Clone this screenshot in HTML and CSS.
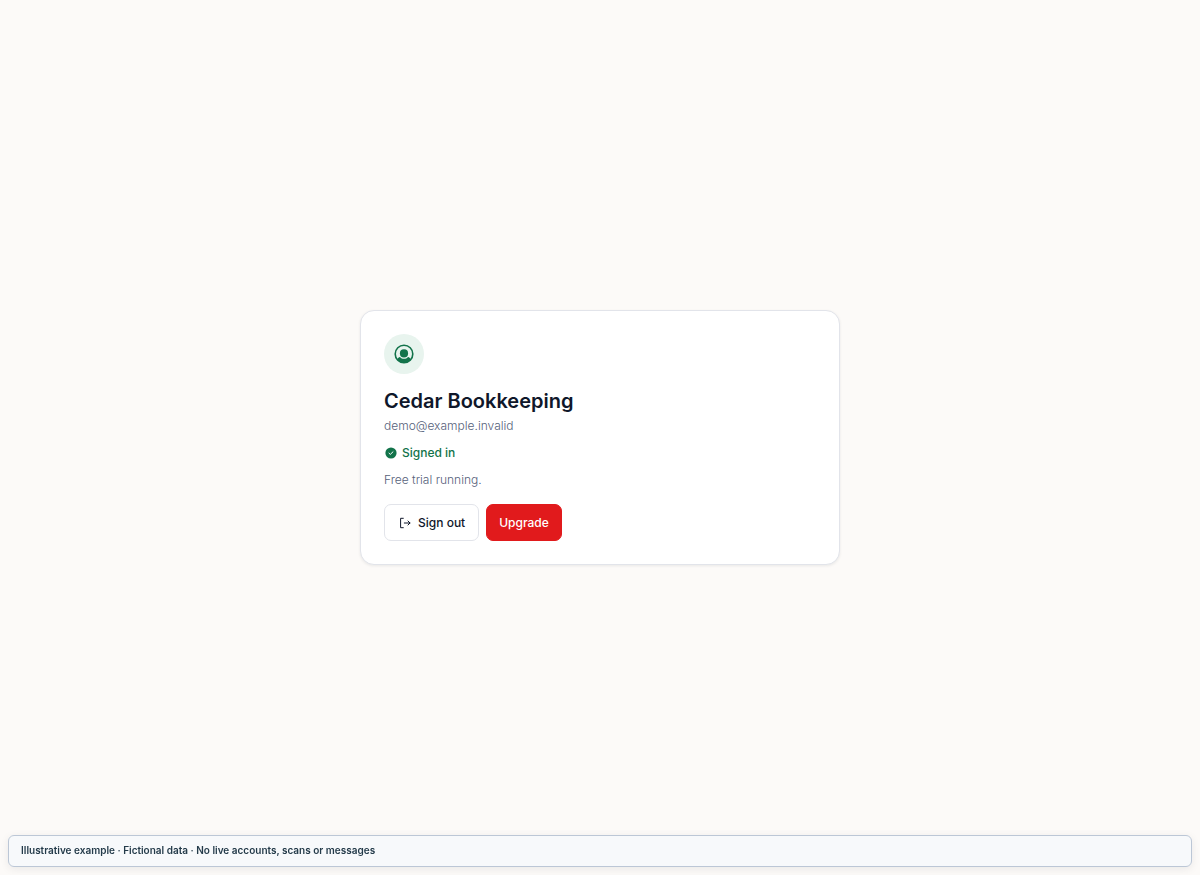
FILE: index.html
```html
<!DOCTYPE html>
<html lang="en">
<head>
<meta charset="utf-8">
<meta name="viewport" content="width=device-width, initial-scale=1">
<title>Cedar Bookkeeping</title>
<link rel="stylesheet" href="styles.css">
</head>
<body>
<main class="page">
  <section class="card" aria-labelledby="account-name">
    <div class="avatar">
      <svg class="avatar-icon" viewBox="0 0 20 20" aria-hidden="true">
        <circle cx="10" cy="10" r="8.8" fill="none" stroke="currentColor" stroke-width="1.6"/>
        <circle cx="10" cy="9.4" r="4.1" fill="currentColor"/>
        <path d="M3.2 15.4C3.9 13.9 4.8 13.1 5.9 12.9C7 14.2 8.4 14.7 10 14.7C11.6 14.7 13 14.2 14.1 12.9C15.2 13.1 16.1 13.9 16.8 15.4C15.1 17.7 12.7 18.9 10 18.9C7.3 18.9 4.9 17.7 3.2 15.4Z" fill="currentColor"/>
      </svg>
    </div>
    <h1 class="name" id="account-name">Cedar Bookkeeping</h1>
    <p class="detail">demo@example.invalid</p>
    <p class="status">
      <svg class="status-icon" viewBox="0 0 14 14" aria-hidden="true">
        <circle cx="7" cy="7" r="5.6" fill="currentColor"/>
        <path d="M5 7.2L6.3 8.4L9 5.8" fill="none" stroke="#fff" stroke-width="1" stroke-linecap="round" stroke-linejoin="round"/>
      </svg>
      Signed in
    </p>
    <p class="detail">Free trial running.</p>
    <div class="actions">
      <button class="button" type="button">
        <svg class="button-icon" viewBox="0 0 14 14" aria-hidden="true">
          <path d="M5.3 2.3H2.6V11.7H5.3M6.3 7H12M10 5L12 7L10 9" fill="none" stroke="currentColor" stroke-width="1" stroke-linecap="round" stroke-linejoin="round"/>
        </svg>
        Sign out
      </button>
      <button class="button button-primary" type="button">Upgrade</button>
    </div>
  </section>
</main>
<footer class="notice">Illustrative example · Fictional data · No live accounts, scans or messages</footer>
</body>
</html>
```
FILE: styles.css
```css
* {
  box-sizing: border-box;
}

body {
  margin: 0;
  background: #fcfaf8;
  color: #0f172a;
  font-family: Inter, "Liberation Sans", sans-serif;
  font-size: 12px;
  line-height: 20px;
}

.page {
  display: flex;
  align-items: center;
  justify-content: center;
  min-height: 100vh;
  padding: 48px 16px;
}

.card {
  width: 100%;
  max-width: 480px;
  padding: 23px;
  border: 1px solid #e2e4ea;
  border-radius: 14px;
  background: #fff;
  box-shadow: 0 1px 3px rgba(15, 23, 42, 0.08);
}

.avatar {
  display: grid;
  place-items: center;
  width: 40px;
  height: 40px;
  border-radius: 50%;
  background: #e8f4ee;
  color: #12734a;
}

.avatar-icon {
  width: 20px;
  height: 20px;
}

.name {
  margin: 13px 0 1px;
  font-size: 20px;
  font-weight: 600;
  line-height: 28px;
}

.detail,
.status {
  margin: 0;
}

.detail {
  color: #56617a;
  font-weight: 300;
}

.status {
  display: flex;
  align-items: center;
  gap: 4px;
  margin: 7px 0;
  color: #12734a;
  font-weight: 500;
}

.status-icon,
.button-icon {
  width: 14px;
  height: 14px;
}

.actions {
  display: flex;
  flex-wrap: wrap;
  gap: 7px;
  margin-top: 14px;
}

.button {
  display: flex;
  align-items: center;
  gap: 6px;
  height: 37px;
  padding: 0 13px;
  border: 1px solid #e2e4ea;
  border-radius: 7px;
  background: #fff;
  color: #0f172a;
  font: inherit;
  font-weight: 500;
}

.button-primary {
  padding: 0 12px;
  border-color: #e11a1c;
  background: #e11a1c;
  color: #fff;
}

.notice {
  position: fixed;
  right: 8px;
  bottom: 8px;
  left: 8px;
  padding: 4px 12px 6px;
  border: 1px solid #bcc7d6;
  border-radius: 6px;
  background: #f7f9fb;
  box-shadow: 0 2px 8px rgba(15, 23, 42, 0.08);
  color: #243b4a;
  font-size: 10px;
  font-weight: 600;
}
```
